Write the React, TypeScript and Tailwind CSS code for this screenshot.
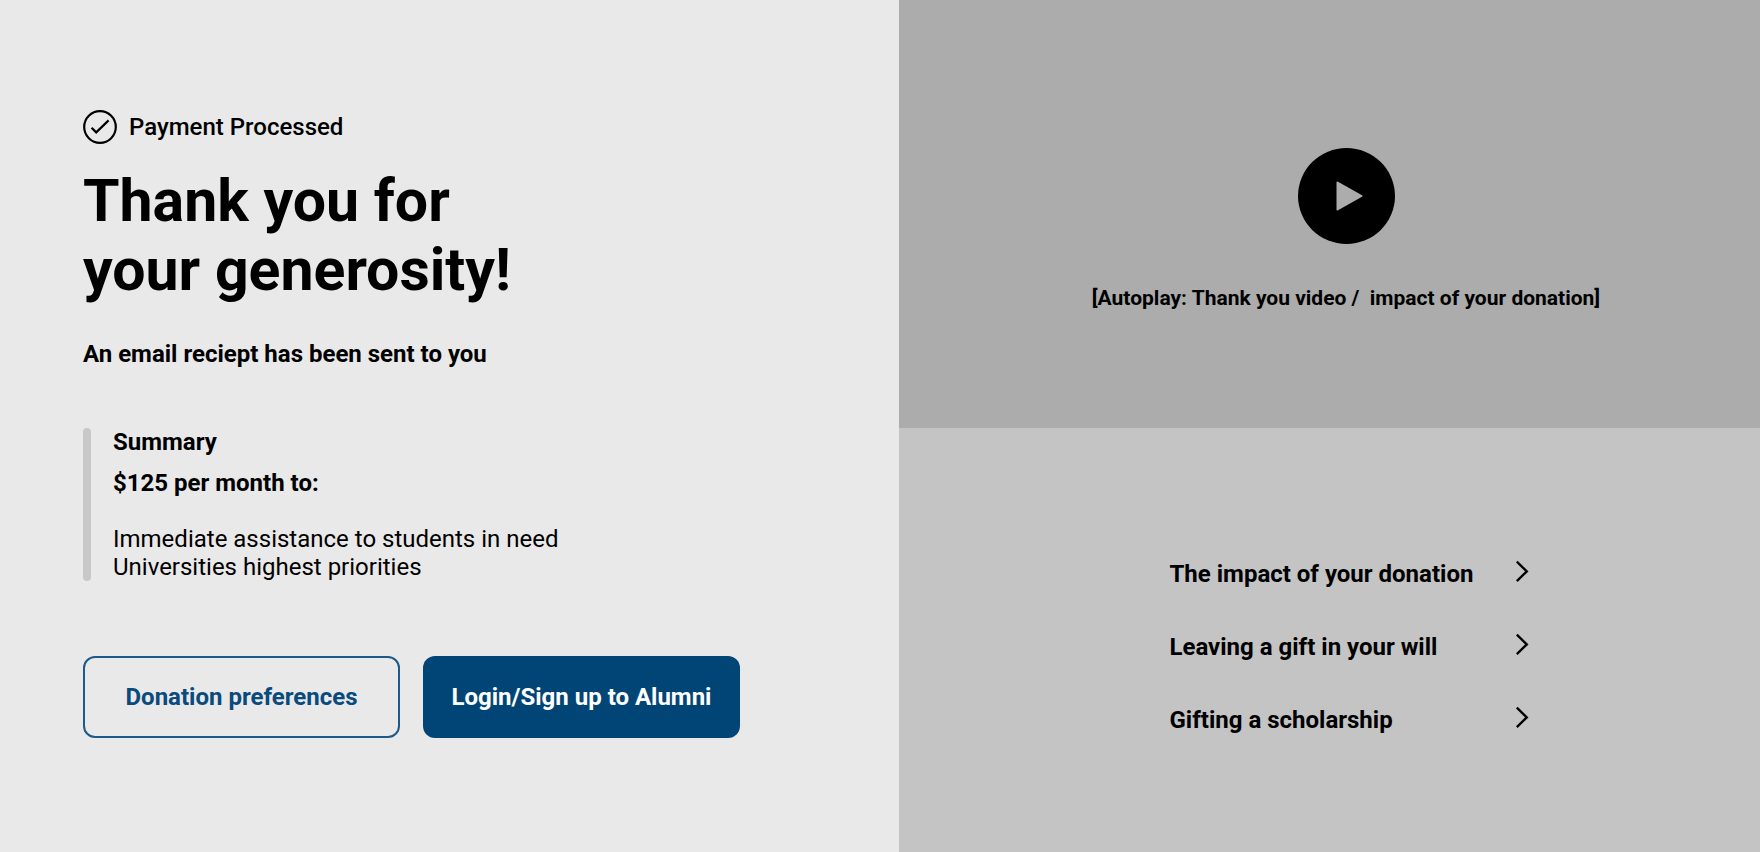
import React from 'react';

interface ImpactLink {
  label: string;
  href: string;
}

const designations = [
  'Immediate assistance to students in need',
  'Universities highest priorities',
];

const impactLinks: ImpactLink[] = [
  { label: 'The impact of your donation', href: '#impact' },
  { label: 'Leaving a gift in your will', href: '#will' },
  { label: 'Gifting a scholarship', href: '#scholarship' },
];

const CheckIcon: React.FC = () => (
  <svg className="h-[34px] w-[34px]" viewBox="0 0 34 34" fill="none" stroke="currentColor" aria-hidden="true">
    <circle cx="17" cy="17" r="15.8" strokeWidth="2.2" />
    <path d="M8.6 17.8L13.2 22.4L25.6 10.4" strokeWidth="2.2" />
  </svg>
);

const ChevronIcon: React.FC = () => (
  <svg className="h-[22px] w-[14px]" viewBox="0 0 14 22" fill="none" stroke="currentColor" strokeWidth="2.4" aria-hidden="true">
    <path d="M0.8 1.7L10.8 11.4L0.8 21.1" />
  </svg>
);

const App: React.FC = () => {
  return (
    <main className="grid min-h-screen grid-cols-[899fr_861fr] bg-[#e9e9e9] font-['Roboto',sans-serif] text-2xl leading-7 text-black">

      {/* Confirmation */}
      <section className="px-[83px] pt-[110px] pb-20">
        <div className="flex items-center gap-3 font-medium">
          <CheckIcon />
          <p>Payment Processed</p>
        </div>

        <h1 className="mt-[22px] text-[59px] leading-[69px] font-bold">
          Thank you for
          <br />
          your generosity!
        </h1>

        <p className="mt-9 font-bold">An email reciept has been sent to you</p>

        {/* Summary */}
        <div className="mt-[60px] flex gap-[22px]">
          <div className="w-2 rounded-full bg-[#c8c8c8]"></div>
          <div>
            <h2 className="font-bold">Summary</h2>
            <p className="mt-[13px] font-bold">$125 per month to:</p>
            <ul className="mt-7">
              {designations.map((name) => (
                <li key={name}>{name}</li>
              ))}
            </ul>
          </div>
        </div>

        <div className="mt-[75px] flex gap-[23px]">
          <button className="h-[82px] w-[317px] rounded-xl border-2 border-[#1f5988] font-bold text-[#0b4a7d]">
            Donation preferences
          </button>
          <button className="h-[82px] w-[317px] rounded-xl bg-[#004575] font-bold text-white">
            Login/Sign up to Alumni
          </button>
        </div>
      </section>

      <div className="flex flex-col">
        {/* Video */}
        <section className="flex h-[428px] flex-col items-center bg-[#acacac] pt-[148px] pl-[33px]">
          <button aria-label="Play video">
            <svg className="h-24 w-[97px]" viewBox="0 0 97 96" aria-hidden="true">
              <ellipse cx="48.5" cy="48" rx="48.5" ry="48" fill="#000" />
              <path d="M39.5 34.5L63.5 48L39.5 61.5Z" fill="#acacac" stroke="#acacac" strokeWidth="2" strokeLinejoin="round" />
            </svg>
          </button>
          <p className="mt-10 text-[21px] font-bold whitespace-pre">[Autoplay: Thank you video /  impact of your donation]</p>
        </section>

        {/* Links */}
        <nav className="flex-1 bg-[#c4c4c4] pt-[132px] pl-10">
          <ul className="mx-auto flex w-[360px] flex-col gap-[45px]">
            {impactLinks.map((link) => (
              <li key={link.label}>
                <a href={link.href} className="flex items-start justify-between font-bold">
                  {link.label}
                  <ChevronIcon />
                </a>
              </li>
            ))}
          </ul>
        </nav>
      </div>
    </main>
  );
};

export default App;
